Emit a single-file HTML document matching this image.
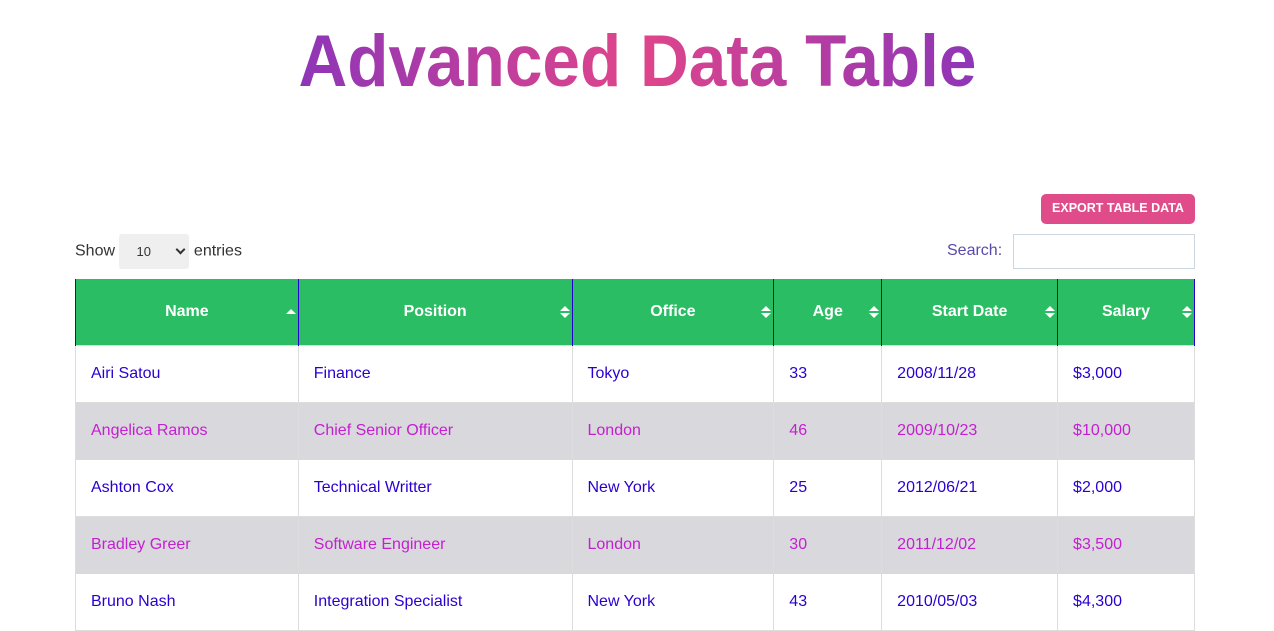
<!DOCTYPE html>
<html><head><meta charset="utf-8"><style>
body{margin:0;background:#fff;font-family:"Liberation Sans",Arial,sans-serif;width:1274px;height:631px;overflow:hidden;position:relative}
h1{position:absolute;left:0;width:1274px;top:22px;margin:0;text-align:center;font-size:73px;font-weight:bold;line-height:80px}
h1 span{display:inline-block;transform:scaleX(0.925);background:linear-gradient(90deg,#8e35b8,#e0458a 50%,#8e35b8);-webkit-background-clip:text;background-clip:text;color:transparent}
.btn{position:absolute;left:1041px;top:194px;width:154px;height:30px;background:#e04c8a;border-radius:5px;color:#fff;font-size:12.5px;font-weight:bold;text-align:center;line-height:29px}
.show{position:absolute;left:75px;top:234px;font-size:16px;color:#333;line-height:34px}
.sel{display:inline-block;width:70px;height:35px;background:#efefef;border-radius:3px;vertical-align:middle;position:relative;font-size:13px;margin:0 0 0 0}
.sel b{position:absolute;left:17px;top:0;font-weight:normal;line-height:35px}
.sel i{position:absolute;right:5px;top:12px;width:5px;height:5px;border-right:2px solid #333;border-bottom:2px solid #333;transform:rotate(45deg)}
.search{position:absolute;left:947px;top:242px;font-size:16px;color:#5a4aa8}
.inp{position:absolute;left:1013px;top:234px;width:180px;height:33px;border:1px solid #cdd7e0}
table{position:absolute;left:75px;top:279px;border-collapse:collapse;width:1120px;font-size:16px}
th{background:#2bbd63;color:#fff;font-weight:bold;height:66px;padding:0;border-left:1px solid #2a00d0;border-right:1px solid #2a00d0;position:relative;text-align:center}
td{height:56px;padding:0 0 0 15px;border:1px solid #ddd;color:#2a00d0}
tr.e td{background:#d9d8dd;color:#c41fd0;border-color:#d9d8dd #ddd}
.s{position:absolute;right:6px;top:27px;width:0;height:0}
.s:before{content:"";position:absolute;left:-6px;top:0;border:5px solid transparent;border-bottom:5px solid #fff;border-top:0}
.s:after{content:"";position:absolute;left:-6px;top:7px;border:5px solid transparent;border-top:5px solid #fff;border-bottom:0}
.s.up:after{display:none}.s.up:before{top:3px}
</style></head><body>
<h1><span>Advanced Data Table</span></h1>
<div class="btn">EXPORT TABLE DATA</div>
<div class="show">Show <span class="sel"><b>10</b><i></i></span> entries</div>
<div class="search">Search:</div>
<div class="inp"></div>
<table>
<colgroup><col style="width:223px"><col style="width:274px"><col style="width:202px"><col style="width:108px"><col style="width:176px"><col style="width:137px"></colgroup>
<tr><th>Name<span class="s up"></span></th><th>Position<span class="s"></span></th><th>Office<span class="s"></span></th><th>Age<span class="s"></span></th><th>Start Date<span class="s"></span></th><th>Salary<span class="s"></span></th></tr>
<tr><td>Airi Satou</td><td>Finance</td><td>Tokyo</td><td>33</td><td>2008/11/28</td><td>$3,000</td></tr>
<tr class="e"><td>Angelica Ramos</td><td>Chief Senior Officer</td><td>London</td><td>46</td><td>2009/10/23</td><td>$10,000</td></tr>
<tr><td>Ashton Cox</td><td>Technical Writter</td><td>New York</td><td>25</td><td>2012/06/21</td><td>$2,000</td></tr>
<tr class="e"><td>Bradley Greer</td><td>Software Engineer</td><td>London</td><td>30</td><td>2011/12/02</td><td>$3,500</td></tr>
<tr><td>Bruno Nash</td><td>Integration Specialist</td><td>New York</td><td>43</td><td>2010/05/03</td><td>$4,300</td></tr>
</table>
</body></html>
